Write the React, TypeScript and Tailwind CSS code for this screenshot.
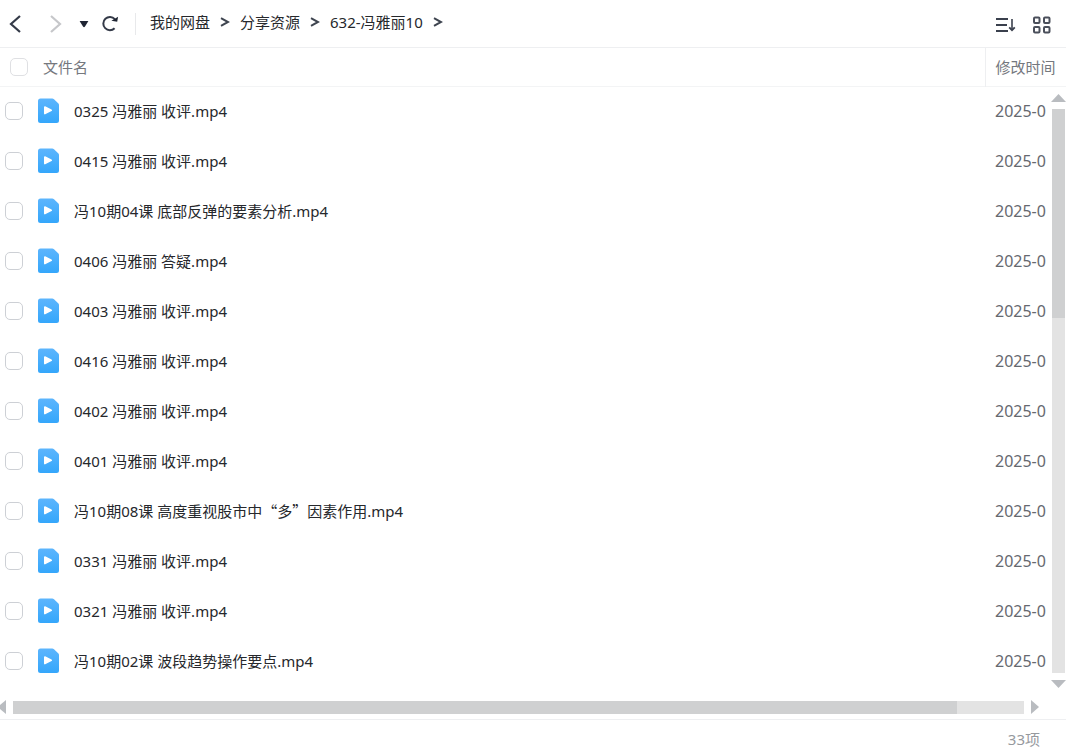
import { Fragment } from "react";

interface FileItem {
  name: string;
  modified: string;
}

const FILES: FileItem[] = [
  { name: "0325 冯雅丽 收评.mp4", modified: "2025-0" },
  { name: "0415 冯雅丽 收评.mp4", modified: "2025-0" },
  { name: "冯10期04课 底部反弹的要素分析.mp4", modified: "2025-0" },
  { name: "0406 冯雅丽 答疑.mp4", modified: "2025-0" },
  { name: "0403 冯雅丽 收评.mp4", modified: "2025-0" },
  { name: "0416 冯雅丽 收评.mp4", modified: "2025-0" },
  { name: "0402 冯雅丽 收评.mp4", modified: "2025-0" },
  { name: "0401 冯雅丽 收评.mp4", modified: "2025-0" },
  { name: "冯10期08课 高度重视股市中“多”因素作用.mp4", modified: "2025-0" },
  { name: "0331 冯雅丽 收评.mp4", modified: "2025-0" },
  { name: "0321 冯雅丽 收评.mp4", modified: "2025-0" },
  { name: "冯10期02课 波段趋势操作要点.mp4", modified: "2025-0" },
];

const CRUMBS = ["我的网盘", "分享资源", "632-冯雅丽10"];

const TOTAL = 33;

function CrumbArrow() {
  return (
    <svg width="10" height="10" viewBox="0 0 10 10" fill="none" stroke="#3f4550" strokeWidth="2">
      <path d="M1 1.2 8 5 1 8.8" />
    </svg>
  );
}

function VideoIcon() {
  return (
    <svg width="21" height="26" viewBox="0 0 21 26" className="shrink-0">
      <defs>
        <linearGradient id="video-fill" x1="0" y1="0" x2="0" y2="1">
          <stop offset="0" stopColor="#5cb5fd" />
          <stop offset="1" stopColor="#34a6fb" />
        </linearGradient>
      </defs>
      <path d="M2.5 .5H14.2Q15.2 .5 16 1.3L20.2 5.3Q21 6.1 21 7.1V22.5A2.5 2.5 0 0 1 18.5 25H2.5A2.5 2.5 0 0 1 0 22.5V3A2.5 2.5 0 0 1 2.5 .5Z" fill="url(#video-fill)" />
      <path d="M6.8 9V15.6L13.2 12.3Z" fill="#fff" stroke="#fff" strokeWidth="1.6" strokeLinejoin="round" />
    </svg>
  );
}

function Checkbox({ label, faint = false }: { label: string; faint?: boolean }) {
  return (
    <input
      type="checkbox"
      aria-label={label}
      className={`block size-[18px] shrink-0 appearance-none rounded-[5px] border bg-white checked:bg-[#34a6fb] ${faint ? "border-[#dfe0e3]" : "border-[#cdd0d5]"}`}
    />
  );
}

// Typographic quotes take a full em in Chinese text
function FileName({ name }: { name: string }) {
  return (
    <span className="whitespace-nowrap">
      {name.split(/([“”])/).map((part, i) =>
        part === "“" || part === "”"
          ? <span key={i} className="font-['Noto_Sans_CJK_SC',sans-serif]">{part}</span>
          : part
      )}
    </span>
  );
}

function Toolbar() {
  return (
    <header className="flex h-12 items-center justify-between border-b border-[#eeeff1] pr-[15px] pl-2">
      <div className="flex items-center">
        <button aria-label="后退">
          <svg width="14" height="18" viewBox="0 0 14 18" fill="none" stroke="#343a48" strokeWidth="2.2">
            <path d="M12 1 3 9l9 8" />
          </svg>
        </button>
        <button aria-label="前进" className="ml-[27px]">
          <svg width="14" height="18" viewBox="0 0 14 18" fill="none" stroke="#c6c7ca" strokeWidth="2.2">
            <path d="m2 1 9 8-9 8" />
          </svg>
        </button>
        <button aria-label="历史记录" className="ml-4">
          <svg width="10" height="8" viewBox="0 0 10 8" fill="#1f2533">
            <path d="M.6 1H9.4L6 6.5Q5 8 4 6.5Z" />
          </svg>
        </button>
        <button aria-label="刷新" className="ml-3">
          <svg width="18" height="18" viewBox="0 0 18 18" fill="none">
            <path d="M13.6 13.2A6.6 6.6 0 1 1 13.8 4.1" stroke="#343a48" strokeWidth="2" />
            <path d="m10.4 5.8 5.8.9.9-4.9Z" fill="#1f2533" />
          </svg>
        </button>
        <div className="mr-[14px] ml-4 h-[22px] w-px bg-[#e8e9eb]" />
        <nav className="flex items-center gap-[10px] pb-1 text-[#26282c]">
          {CRUMBS.map((crumb) => (
            <Fragment key={crumb}>
              <a href="#" className="whitespace-nowrap">{crumb}</a>
              <CrumbArrow />
            </Fragment>
          ))}
        </nav>
      </div>
      <div className="flex items-center gap-4 pt-0.5">
        <button aria-label="排序">
          <svg width="21" height="18" viewBox="0 0 21 18" fill="none" stroke="#3a404d">
            <path d="M1 3H13M1 9H12M1 15H13" strokeWidth="2" />
            <path d="M17 3V14" strokeWidth="1.6" />
            <path d="m14.2 11.4 2.8 2.8 2.8-2.8" strokeWidth="1.8" />
          </svg>
        </button>
        <button aria-label="网格视图">
          <svg width="19" height="18" viewBox="0 0 19 18" fill="none" stroke="#4a4f5b" strokeWidth="2">
            <rect x="2" y="1.5" width="5.5" height="5.5" rx="1" />
            <rect x="12" y="1.5" width="5.5" height="5.5" rx="1" />
            <rect x="2" y="11" width="5.5" height="5.5" rx="1" />
            <rect x="12" y="11" width="5.5" height="5.5" rx="1" />
          </svg>
        </button>
      </div>
    </header>
  );
}

function VerticalScrollbar() {
  return (
    <div className="absolute top-[46px] right-0 bottom-0 flex w-[15px] flex-col items-center gap-[7px] pb-3">
      <svg width="15" height="8" viewBox="0 0 15 8" fill="#b9bcc0" className="shrink-0">
        <path d="M7.5 0 15 8H0Z" />
      </svg>
      <div className="w-[13px] flex-1 bg-[#e3e3e3]">
        <div className="h-[37%] bg-[#cfd0d1]" />
      </div>
      <svg width="15" height="8" viewBox="0 0 15 8" fill="#b9bcc0" className="shrink-0">
        <path d="M0 0H15L7.5 8Z" />
      </svg>
    </div>
  );
}

function HorizontalScrollbar() {
  return (
    <div className="flex items-center gap-[7px] pr-[27px] pb-[5px]">
      <svg width="6" height="14" viewBox="0 0 6 14" fill="#b9bcc0" className="shrink-0">
        <path d="M6 0V14L0 9V5Z" />
      </svg>
      <div className="h-[13px] flex-1 bg-[#e3e3e3]">
        <div className="h-full w-[93.4%] bg-[#cfd0d1]" />
      </div>
      <svg width="8" height="14" viewBox="0 0 8 14" fill="#b9bcc0" className="shrink-0">
        <path d="M0 0 8 7 0 14Z" />
      </svg>
    </div>
  );
}

export default function App() {
  return (
    <div className="flex min-h-screen flex-col bg-white font-['Noto_Sans','Noto_Sans_CJK_SC',sans-serif] text-[15px] leading-5">
      <Toolbar />

      <main className="relative flex-1">
        <table className="w-full table-fixed border-collapse text-left">
          <thead>
            <tr className="h-[38px] border-b border-[#f3f4f5] text-[#75787e]">
              <th className="p-0 font-normal">
                <div className="flex items-center gap-[15px] pl-[10px]">
                  <Checkbox label="全选" faint />
                  <span>文件名</span>
                </div>
              </th>
              <th className="w-[81px] border-l border-[#eeeff1] p-0 pl-[10px] font-normal whitespace-nowrap">修改时间</th>
            </tr>
          </thead>
          <tbody>
            {FILES.map((file) => (
              <tr key={file.name} className="h-[50px]">
                <td className="p-0">
                  <div className="flex items-center pl-[5px] text-[#26282c]">
                    <Checkbox label={file.name} />
                    <div className="ml-[15px] flex items-center gap-[15px]">
                      <VideoIcon />
                      <FileName name={file.name} />
                    </div>
                  </div>
                </td>
                <td className="p-0 pl-[10px] text-base leading-5 text-[#66696f]">{file.modified}</td>
              </tr>
            ))}
          </tbody>
        </table>
        <VerticalScrollbar />
      </main>

      <HorizontalScrollbar />

      <footer className="flex h-8 items-center justify-end border-t border-[#eeeff1] pt-1.5 pr-[26px] text-[#96999e]">
        {TOTAL}项
      </footer>
    </div>
  );
}
